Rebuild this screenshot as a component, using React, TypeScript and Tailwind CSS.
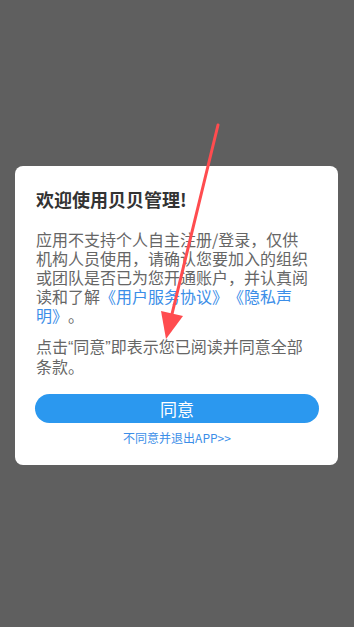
export default function App() {
  return (
    <div
      className="relative w-full h-[627px] bg-[#5f5f5f] flex items-center justify-center overflow-hidden [text-spacing-trim:space-all]"
      style={{ fontFamily: '"Noto Sans CJK SC", "Noto Sans", sans-serif' }}
    >
      <div className="w-[323px] bg-white rounded-[8px] pl-[20px] pr-[19px] pt-[21px] pb-[19px] mt-[4px] ml-[-1px]">
        <div className="pl-[1px] pr-[6px]">
          <h1 className="text-[18px] leading-[24px] font-bold text-[#333333]">欢迎使用贝贝管理!</h1>
          <p className="mt-[19px] text-[16px] leading-[19px] text-[#666666]">
            应用不支持个人自主注册/登录，仅供机构人员使用，请确认您要加入的组织或团队是否已为您开通账户，并认真阅读和了解
            <span className="text-[#3b8ee8]">《用户服务协议》《隐私声明》</span>。
          </p>
          <p className="mt-[12px] text-[16px] leading-[19px] text-[#666666]">
            点击<span className="font-['Liberation_Sans']">“</span>同意<span className="font-['Liberation_Sans']">”</span>即表示您已阅读并同意全部条款。
          </p>
        </div>
        <button className="mt-[18px] w-full h-[29px] rounded-full bg-[#2b98ef] text-white text-[17px] leading-[29px]">
          同意
        </button>
        <div className="mt-[7px] text-center text-[12px] leading-[16px] text-[#3b8ee8]">不同意并退出APP&gt;&gt;</div>
      </div>

      <svg className="absolute inset-0 pointer-events-none" width="354" height="627" viewBox="0 0 354 627">
        <line x1="218" y1="125" x2="172" y2="314" stroke="#ff4c4f" strokeWidth="3" strokeLinecap="round" />
        <polygon points="166,339 183,316 161,311" fill="#ff4c4f" />
      </svg>
    </div>
  );
}
